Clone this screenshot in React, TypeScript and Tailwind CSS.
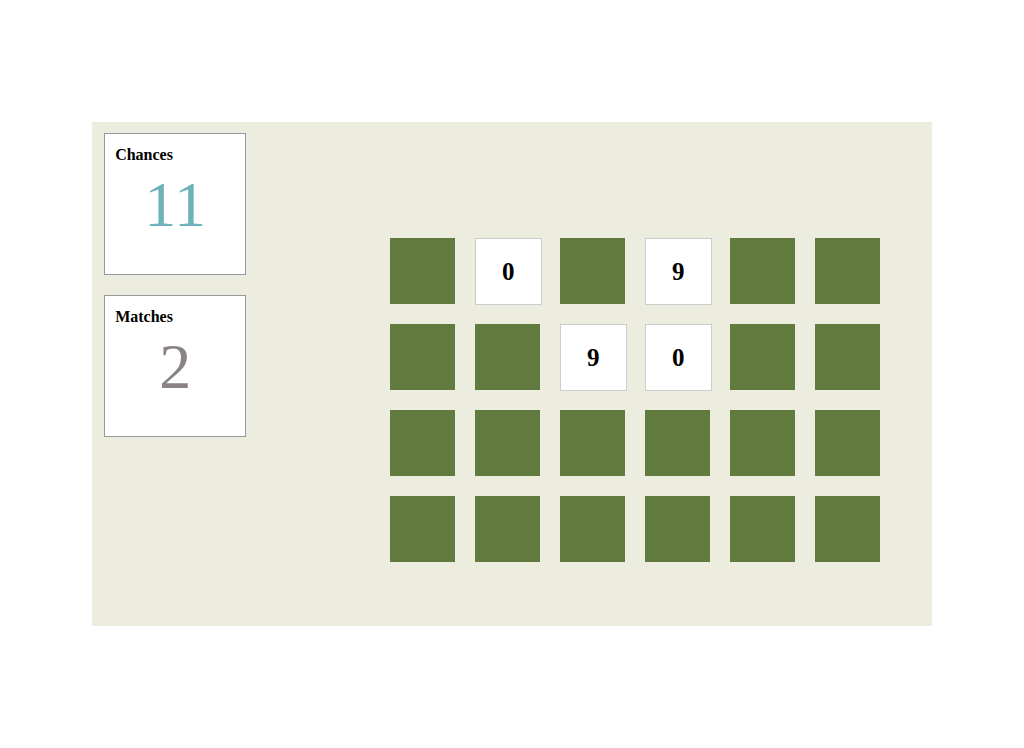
const tiles: (string | null)[] = [
  null, "0", null, "9", null, null,
  null, null, "9", "0", null, null,
  null, null, null, null, null, null,
  null, null, null, null, null, null,
];

function StatCard({ label, value, color }: { label: string; value: number; color: string }) {
  return (
    <div className="w-[142px] h-[142px] border border-[#999999] bg-white px-[10px] pt-[12px]">
      <div className="text-[16px] font-bold text-black leading-[18px]">{label}</div>
      <div className={`mt-[9px] text-center text-[64px] leading-none ${color}`}>{value}</div>
    </div>
  );
}

export default function App() {
  return (
    <div className="w-full pt-[122px] font-['Liberation_Serif',serif]">
      <div className="mx-auto w-[82%] h-[504px] bg-[#ecedde] flex px-[12px] py-[11px]">
        <div className="flex flex-col gap-[20px]">
          <StatCard label="Chances" value={11} color="text-[#6db3b9]" />
          <StatCard label="Matches" value={2} color="text-[#8a8385]" />
        </div>
        <div className="ml-auto mr-[40px] mt-[105px] grid grid-cols-[repeat(6,65px)] auto-rows-[66px] gap-[20px]">
          {tiles.map((t, i) =>
            t === null ? (
              <div key={i} className="w-[65px] h-[66px] bg-[#617a3e]" />
            ) : (
              <div
                key={i}
                className="w-[67px] h-[67px] bg-white border border-[#cccccc] flex items-center justify-center text-[25px] font-bold text-black"
              >
                {t}
              </div>
            )
          )}
        </div>
      </div>
    </div>
  );
}
